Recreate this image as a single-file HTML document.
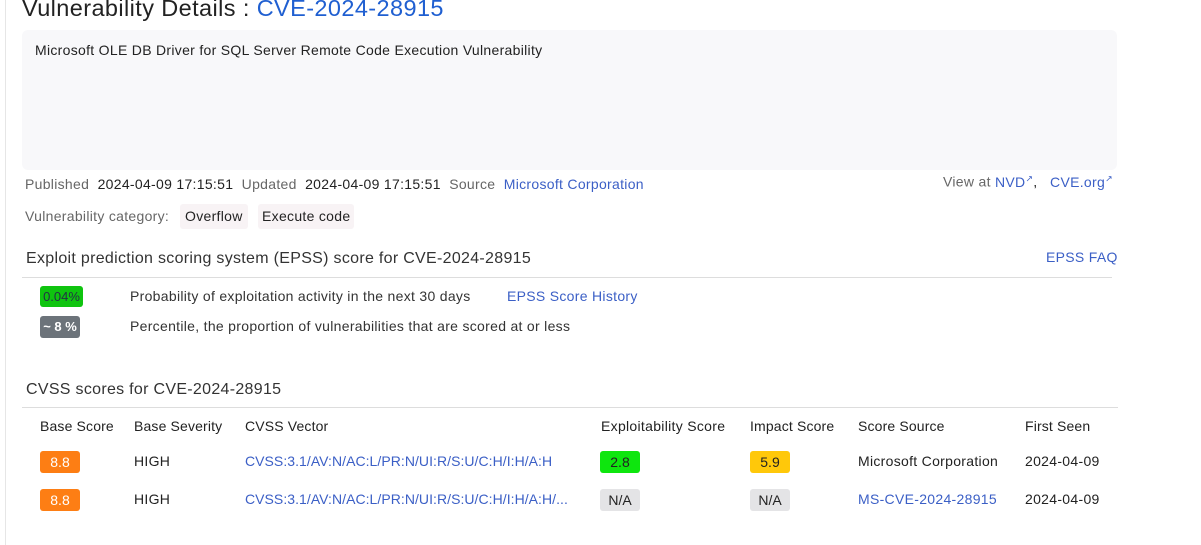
<!DOCTYPE html>
<html><head><style>
body{margin:0;width:1201px;height:545px;background:#fff;font-family:"Liberation Sans",sans-serif;position:relative;overflow:hidden;color:#222;letter-spacing:0.3px}
.a{position:absolute;white-space:nowrap}
.l{color:#3b5fc6}
.g{color:#666}
.t{letter-spacing:0.15px}
.b{position:absolute;height:22px;line-height:22px;text-align:center;border-radius:3px;font-size:14px;letter-spacing:0}
</style></head><body>
<div style="position:absolute;left:5px;top:0;width:1px;height:545px;background:#e6e6e6"></div>
<div class="a" style="left:22px;top:-5px;font-size:23.5px;color:#222;letter-spacing:0.4px">Vulnerability Details : <span style="color:#1f5fd1">CVE-2024-28915</span></div>
<div style="position:absolute;left:22px;top:30px;width:1095px;height:140px;background:#f8f8fa;border-radius:6px"></div>
<div class="a" style="left:35px;top:42px;font-size:14px">Microsoft OLE DB Driver for SQL Server Remote Code Execution Vulnerability</div>
<div class="a" style="left:25px;top:176px;font-size:14px"><span class="g">Published</span>&nbsp; 2024-04-09 17:15:51 <span class="g">&nbsp;Updated</span>&nbsp; 2024-04-09 17:15:51 <span class="g">&nbsp;Source</span>&nbsp; <span class="l">Microsoft Corporation</span></div>
<div class="a" style="left:943px;top:173px;font-size:14px"><span class="g">View at</span> <span class="l">NVD<sup style="font-size:9px">↗</sup></span>, &nbsp; <span class="l">CVE.org<sup style="font-size:9px">↗</sup></span></div>
<div class="a g" style="left:25px;top:208px;font-size:14px">Vulnerability category:</div>
<div class="a" style="left:180px;top:204px;height:25px;line-height:25px;padding:0 5px;background:#f8f3f5;border-radius:3px;font-size:14px">Overflow</div>
<div class="a" style="left:258px;top:204px;height:25px;line-height:25px;padding:0 4px;background:#f8f3f5;border-radius:3px;font-size:14px">Execute code</div>
<div class="a" style="left:26px;top:250px;font-size:16px;color:#333">Exploit prediction scoring system (EPSS) score for CVE-2024-28915</div>
<div class="a l" style="left:1046px;top:249px;font-size:14px">EPSS FAQ</div>
<div style="position:absolute;left:22px;top:277px;width:1090px;height:1px;background:#ddd"></div>
<div class="b" style="left:40px;top:286px;width:43px;height:21px;line-height:21px;background:#0fc40f;color:#234;font-size:13px">0.04%</div>
<div class="a" style="left:130px;top:288px;font-size:14px;color:#333">Probability of exploitation activity in the next 30 days</div>
<div class="a l" style="left:507px;top:288px;font-size:14px">EPSS Score History</div>
<div class="b" style="left:40px;top:316px;width:40px;background:#6c737a;color:#fff;font-size:13px;font-weight:bold">~ 8 %</div>
<div class="a" style="left:130px;top:318px;font-size:14px;color:#333">Percentile, the proportion of vulnerabilities that are scored at or less</div>
<div class="a" style="left:26px;top:381px;font-size:16px;color:#333">CVSS scores for CVE-2024-28915</div>
<div style="position:absolute;left:22px;top:407px;width:1096px;height:1px;background:#ddd"></div>
<div class="a t" style="left:40px;top:418px;font-size:14px">Base Score</div>
<div class="a t" style="left:134px;top:418px;font-size:14px">Base Severity</div>
<div class="a t" style="left:245px;top:418px;font-size:14px">CVSS Vector</div>
<div class="a" style="left:601px;top:418px;font-size:14px">Exploitability Score</div>
<div class="a t" style="left:750px;top:418px;font-size:14px">Impact Score</div>
<div class="a t" style="left:858px;top:418px;font-size:14px">Score Source</div>
<div class="a t" style="left:1025px;top:418px;font-size:14px">First Seen</div>
<div class="b" style="left:40px;top:451px;width:40px;background:#fd7e14;color:#fff">8.8</div>
<div class="a" style="left:134px;top:453px;font-size:14px">HIGH</div>
<div class="a l" style="left:245px;top:453px;font-size:14px;letter-spacing:0.05px">CVSS:3.1/AV:N/AC:L/PR:N/UI:R/S:U/C:H/I:H/A:H</div>
<div class="b" style="left:600px;top:451px;width:40px;background:#0ee60e;color:#222">2.8</div>
<div class="b" style="left:750px;top:451px;width:40px;background:#ffc80a;color:#222">5.9</div>
<div class="a" style="left:858px;top:453px;font-size:14px">Microsoft Corporation</div>
<div class="a" style="left:1025px;top:453px;font-size:14px">2024-04-09</div>
<div class="b" style="left:40px;top:489px;width:40px;background:#fd7e14;color:#fff">8.8</div>
<div class="a" style="left:134px;top:491px;font-size:14px">HIGH</div>
<div class="a l" style="left:245px;top:491px;font-size:14px;letter-spacing:0.05px">CVSS:3.1/AV:N/AC:L/PR:N/UI:R/S:U/C:H/I:H/A:H/...</div>
<div class="b" style="left:600px;top:489px;width:40px;background:#e4e4e6;color:#222">N/A</div>
<div class="b" style="left:750px;top:489px;width:40px;background:#e4e4e6;color:#222">N/A</div>
<div class="a l" style="left:858px;top:491px;font-size:14px">MS-CVE-2024-28915</div>
<div class="a" style="left:1025px;top:491px;font-size:14px">2024-04-09</div>
</body></html>
